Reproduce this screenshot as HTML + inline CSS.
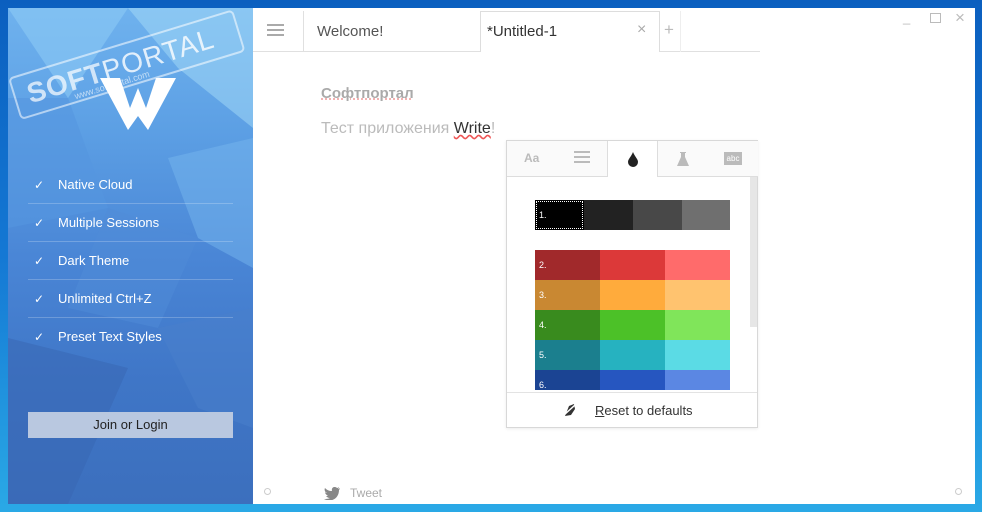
<!DOCTYPE html>
<html><head><meta charset="utf-8"><style>
*{margin:0;padding:0;box-sizing:border-box}
body{width:982px;height:512px;overflow:hidden;position:relative;font-family:"Liberation Sans","DejaVu Sans",sans-serif;background:linear-gradient(180deg,#0b5fbf 0%,#1478d4 50%,#2aa9e6 100%)}
.win{position:absolute;left:8px;top:8px;width:967px;height:496px;background:#fff}
.side{position:absolute;left:8px;top:8px;width:245px;height:496px;background:linear-gradient(180deg,#6fb2ee 0%,#5c9fe4 25%,#4a86d6 50%,#3f76c7 75%,#3c6fbd 100%);overflow:hidden}
.poly{position:absolute;left:0;top:0}
.feat{position:absolute;left:20px;width:205px;height:38px;border-bottom:1px solid rgba(255,255,255,.22);color:#fff;font-size:13px;line-height:38px;padding-left:30px}
.feat:before{content:"\2713";position:absolute;left:6px;font-size:12px}
.btn{position:absolute;left:20px;top:404px;width:205px;height:26px;background:#b9c8e0;color:#222;font-size:13px;text-align:center;line-height:26px}
.tab{position:absolute;font-size:15px;color:#555}
.pop{position:absolute;left:506px;top:140px;width:252px;height:288px;background:#fff;border:1px solid #d8d8d8;box-shadow:0 1px 3px rgba(0,0,0,.08)}
.sw{position:absolute;height:30px}
.lbl{color:#fff;font-size:9px;position:absolute;left:4px;top:10px}
</style></head><body>
<div class="win"></div>
<div class="side">
<svg class="poly" width="245" height="496">
<polygon points="0,0 120,0 60,90" fill="#8ccaf5" opacity=".6"/>
<polygon points="120,0 245,0 245,120 170,60" fill="#a6dcf7" opacity=".5"/>
<polygon points="0,90 60,90 100,200 0,220" fill="#5596e0" opacity=".6"/>
<polygon points="160,150 245,130 245,260 190,230" fill="#76b6ee" opacity=".5"/>
<polygon points="100,200 190,230 150,320 60,300" fill="#4f8bd8" opacity=".5"/>
<polygon points="0,330 120,360 60,496 0,496" fill="#3766b2" opacity=".5"/>
<polygon points="150,320 245,300 245,420 190,400" fill="#4a7fcc" opacity=".5"/>
<polygon points="92,70 112,70 122,100 130,80 138,100 148,70 168,70 140,122 130,108 120,122" fill="#fff"/>
</svg>
<div style="position:absolute;left:0px;top:40px;width:235px;height:44px;border:2px solid rgba(255,255,255,.55);border-radius:5px;transform:rotate(-17deg);transform-origin:left top;top:70px;color:rgba(255,255,255,.7);font-size:28px;font-weight:bold;line-height:40px;padding-left:12px;letter-spacing:1px">SOFT<span style="color:rgba(255,255,255,.8);font-weight:normal">PORTAL</span></div>
<div style="position:absolute;left:65px;top:72px;font-size:9px;color:rgba(255,255,255,.6);transform:rotate(-17deg)">www.softportal.com</div>
<div class="feat" style="top:158px">Native Cloud</div>
<div class="feat" style="top:196px">Multiple Sessions</div>
<div class="feat" style="top:234px">Dark Theme</div>
<div class="feat" style="top:272px">Unlimited Ctrl+Z</div>
<div class="feat" style="top:310px;border:none">Preset Text Styles</div>
<div class="btn">Join or Login</div>
</div>
<div style="position:absolute;left:253px;top:51px;width:507px;height:1px;background:#e0e0e0"></div>
<div style="position:absolute;left:267px;top:24px;width:17px;height:2px;background:#aaa;box-shadow:0 5px 0 #aaa,0 10px 0 #aaa"></div>
<div style="position:absolute;left:303px;top:11px;width:1px;height:41px;background:#e0e0e0"></div>
<div class="tab" style="left:317px;top:23px">Welcome!</div>
<div style="position:absolute;left:480px;top:11px;width:180px;height:41px;background:#fff;border:1px solid #ddd;border-bottom:none"></div>
<div class="tab" style="left:487px;top:23px;color:#333">*Untitled-1</div>
<div class="tab" style="left:637px;top:21px;color:#aaa;font-size:16px">×</div>
<div class="tab" style="left:664px;top:20px;color:#bbb;font-size:17px">+</div>
<div style="position:absolute;left:680px;top:11px;width:1px;height:41px;background:#eee"></div>
<div class="tab" style="left:903px;top:10px;color:#bbb;font-size:13px">_</div>
<div style="position:absolute;left:930px;top:13px;width:11px;height:10px;border:1px solid #bbb"></div>
<div class="tab" style="left:955px;top:8px;color:#bbb;font-size:17px">×</div>
<div style="position:absolute;left:321px;top:85px;font-size:15px;font-weight:bold;color:#aaa;text-decoration:underline dotted #e99">Софтпортал</div>
<div style="position:absolute;left:321px;top:120px;font-size:16px;color:#bbb">Тест приложения <span style="color:#333;text-decoration:underline wavy #e55">Write</span>!</div>
<div class="pop">
<div style="position:absolute;left:0;top:35px;width:100px;height:1px;background:#ddd"></div>
<div style="position:absolute;left:150px;top:35px;width:101px;height:1px;background:#ddd"></div>
<div style="position:absolute;left:100px;top:0;width:51px;height:36px;border-left:1px solid #ddd;border-right:1px solid #ddd"></div>
<div style="position:absolute;left:0;top:0;width:100px;height:35px;background:#fafafa"></div>
<div style="position:absolute;left:151px;top:0;width:100px;height:35px;background:#fafafa"></div>
<div style="position:absolute;left:17px;top:10px;font-size:12px;font-weight:bold;color:#bbb">Aa</div>
<div style="position:absolute;left:67px;top:10px;width:16px;height:2px;background:#bbb;box-shadow:0 5px 0 #bbb,0 10px 0 #bbb"></div>
<svg style="position:absolute;left:120px;top:10px" width="12" height="16"><path d="M6 1 C4 6 1 8 1 11 A5 5 0 0 0 11 11 C11 8 8 6 6 1Z" fill="#222"/></svg>
<svg style="position:absolute;left:169px;top:10px" width="14" height="16"><path d="M4 1 H10 V2 H9 V6 L13 15 H1 L5 6 V2 H4Z" fill="#bbb"/></svg>
<div style="position:absolute;left:217px;top:11px;width:18px;height:13px;background:#bbb;color:#fff;font-size:8px;text-align:center;line-height:13px">abc</div>
<div style="position:absolute;left:243px;top:36px;width:7px;height:150px;background:#e6e6e6"></div>
<div class="sw" style="left:28px;top:59px;width:49px;background:#000;outline:1px dotted #fff;outline-offset:-2px"><span class="lbl">1.</span></div>
<div class="sw" style="left:77px;top:59px;width:49px;background:#222"></div>
<div class="sw" style="left:126px;top:59px;width:49px;background:#484848"></div>
<div class="sw" style="left:175px;top:59px;width:48px;background:#6f6f6f"></div>
<div style="position:absolute;left:28px;top:109px;width:195px;height:140px;overflow:hidden">
<div class="sw" style="left:0;top:0;width:65px;background:#a1292b"><span class="lbl">2.</span></div><div class="sw" style="left:65px;top:0;width:65px;background:#dc3939"></div><div class="sw" style="left:130px;top:0;width:65px;background:#ff6b6b"></div>
<div class="sw" style="left:0;top:30px;width:65px;background:#c98832"><span class="lbl">3.</span></div><div class="sw" style="left:65px;top:30px;width:65px;background:#ffab3c"></div><div class="sw" style="left:130px;top:30px;width:65px;background:#ffc36f"></div>
<div class="sw" style="left:0;top:60px;width:65px;background:#398b1e"><span class="lbl">4.</span></div><div class="sw" style="left:65px;top:60px;width:65px;background:#4cc128"></div><div class="sw" style="left:130px;top:60px;width:65px;background:#80e55a"></div>
<div class="sw" style="left:0;top:90px;width:65px;background:#1b7f8e"><span class="lbl">5.</span></div><div class="sw" style="left:65px;top:90px;width:65px;background:#26b2c0"></div><div class="sw" style="left:130px;top:90px;width:65px;background:#5bdbe5"></div>
<div class="sw" style="left:0;top:120px;width:65px;background:#1b4493"><span class="lbl">6.</span></div><div class="sw" style="left:65px;top:120px;width:65px;background:#2656c0"></div><div class="sw" style="left:130px;top:120px;width:65px;background:#5b87e3"></div>
</div>
<div style="position:absolute;left:0;top:251px;width:250px;height:1px;background:#e3e3e3"></div>
<svg style="position:absolute;left:56px;top:262px" width="14" height="14"><path d="M2 13 L6 3 L11 1 L12 6 L8 12Z" fill="#333"/><path d="M1 12 L12 2" stroke="#fff" stroke-width="1.5"/></svg>
<div style="position:absolute;left:88px;top:262px;font-size:13px;color:#333"><u>R</u>eset to defaults</div>
</div>
<div style="position:absolute;left:264px;top:488px;width:7px;height:7px;border:1px solid #ccc;border-radius:50%"></div>
<div style="position:absolute;left:955px;top:488px;width:7px;height:7px;border:1px solid #ccc;border-radius:50%"></div>
<svg style="position:absolute;left:324px;top:486px" width="17" height="14"><path d="M16 2 C15 3 14 3 14 3 C15 2 15 1 15 1 C14 2 13 2 13 2 C11 0 7 1 8 5 C5 5 3 4 1 2 C0 4 1 6 3 7 C2 7 2 7 1 6 C1 8 3 9 4 10 C3 10 2 10 2 10 C3 11 4 12 6 12 C4 13 2 13 0 13 C8 17 15 12 15 4 C16 3 16 2 16 2Z" fill="#888"/></svg>
<div style="position:absolute;left:350px;top:486px;font-size:12px;color:#aaa">Tweet</div>
</body></html>
